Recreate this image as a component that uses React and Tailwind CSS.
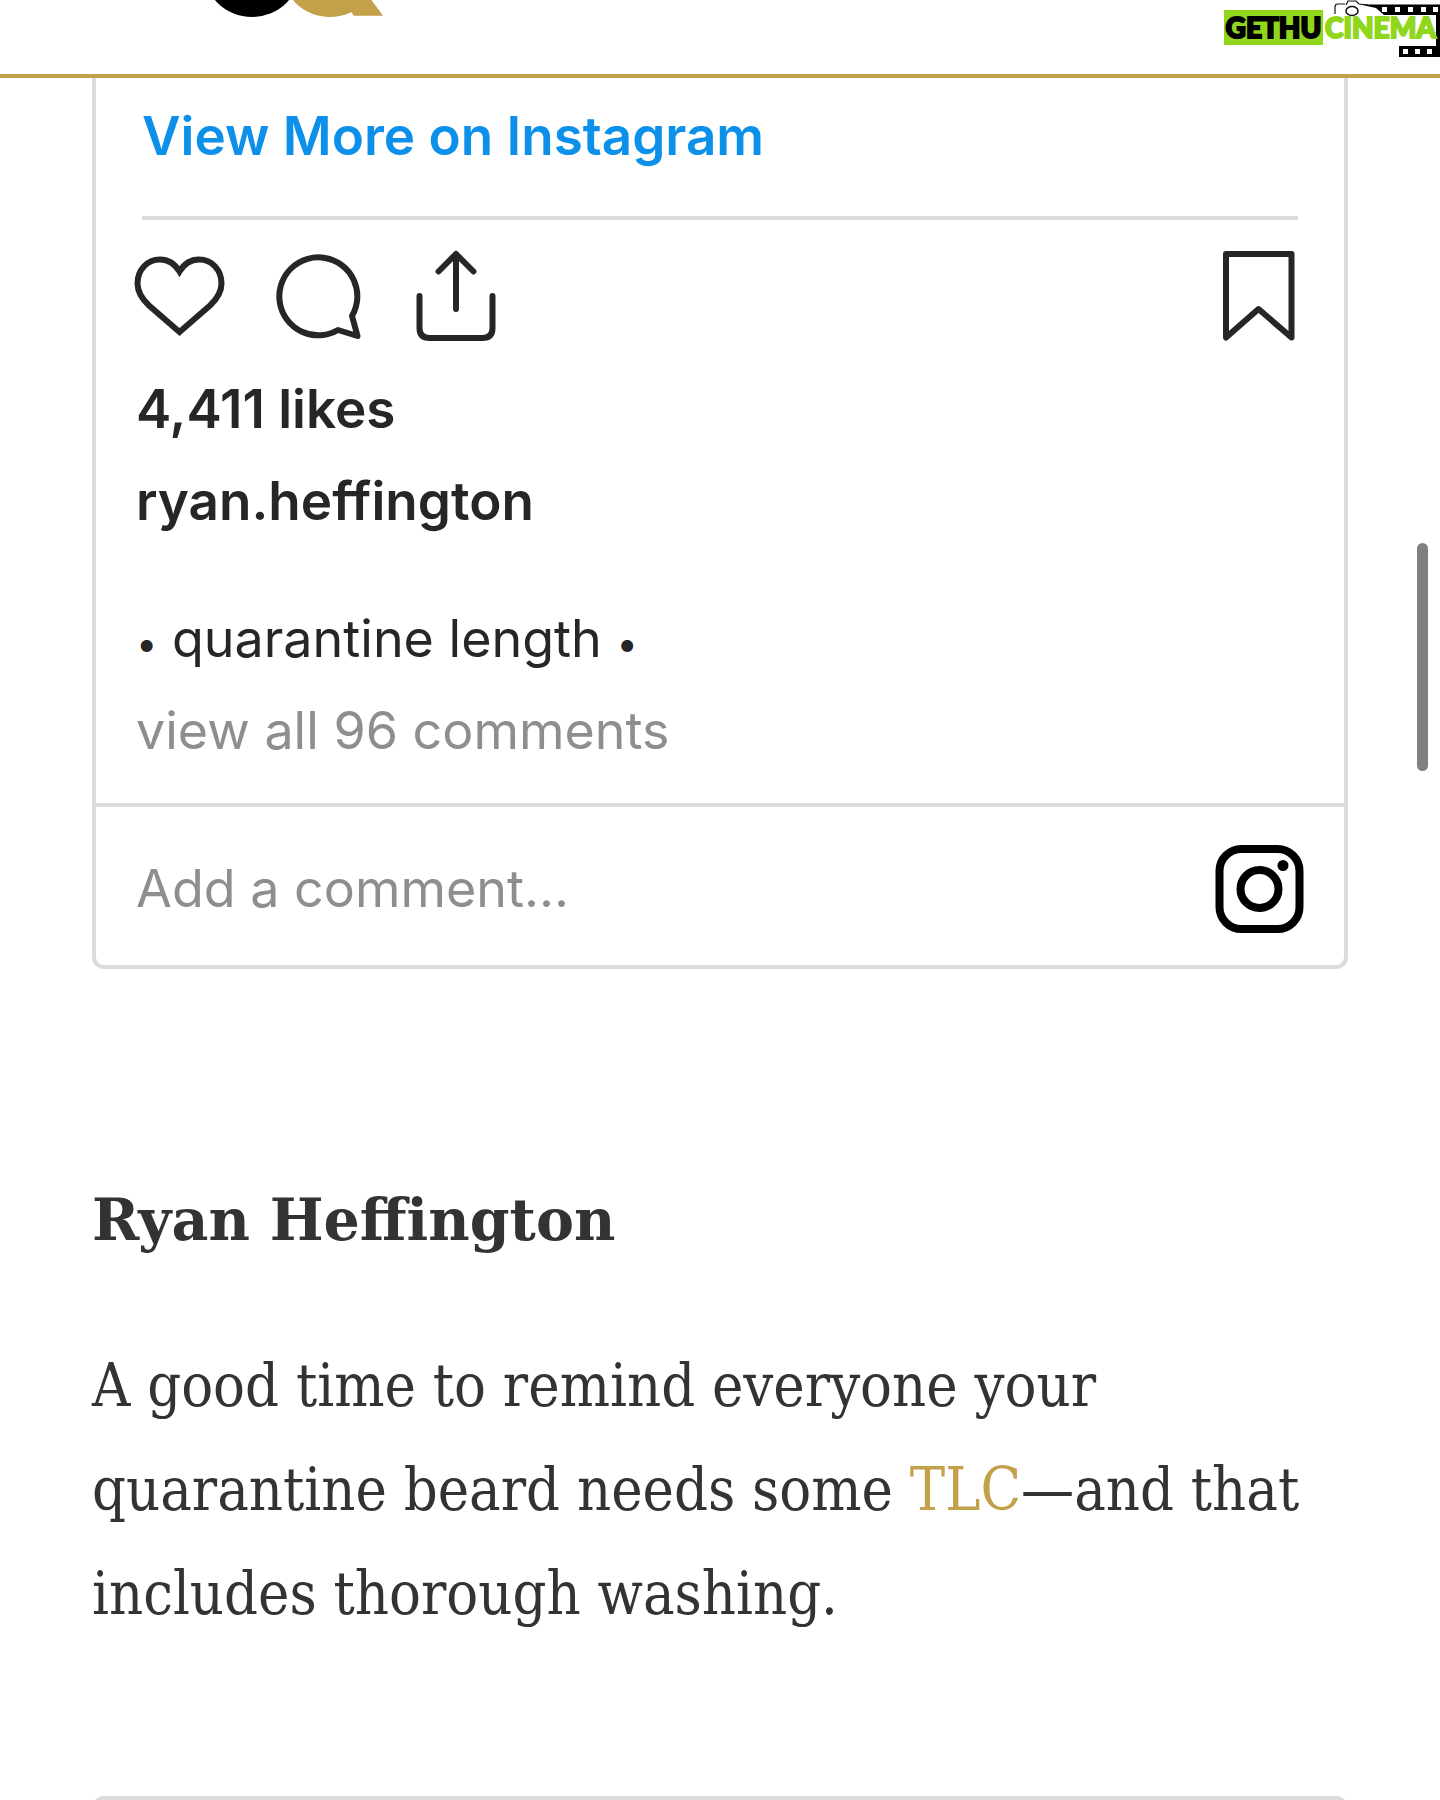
const FILM_TOP = [1382, 1395, 1408, 1421, 1433];
const FILM_BOTTOM = [1403, 1415, 1427];

const COMMENTS_COUNT = 96;

function GQLogo() {
  return (
    <svg className="ml-[200px] h-5 w-[184px]" viewBox="200 0 184 20" role="img" aria-label="GQ">
      <circle cx="252" cy="-32" r="49" fill="#000" />
      <circle cx="330" cy="-32" r="49" fill="#c3a04a" />
      <path d="M340 0 L351.500 12.500 L354 15.700 H383 L371.500 0 Z" fill="#c3a04a" />
    </svg>
  );
}

function FilmStrip() {
  return (
    <svg className="absolute right-0 top-0 h-[60px] w-[110px]" viewBox="1330 0 110 60" aria-hidden="true">
      <path d="M1360 4.500 H1440 V57 H1399 V46 H1436 V15 H1384 L1376 8 Z" fill="#000" />
      {FILM_TOP.map((x) => (
        <rect key={x} x={x} y="7" width="5" height="5" fill="#fff" />
      ))}
      {FILM_BOTTOM.map((x) => (
        <rect key={x} x={x} y="49" width="5" height="5" fill="#fff" />
      ))}
      <path
        d="M1335 14 V7 Q1335 4 1338 4 H1345 M1346 5 L1348 1 H1356 L1359 4 L1368 5"
        fill="none"
        stroke="#111"
        strokeWidth="1.200"
      />
      <ellipse cx="1352" cy="11" rx="6" ry="4.500" fill="#fff" stroke="#111" strokeWidth="1.500" />
    </svg>
  );
}

function Watermark() {
  return (
    <div className="absolute right-0 top-0 flex pt-[10px] font-['Lato'] text-[28px] leading-[35px] font-black [-webkit-text-stroke:2px]">
      <FilmStrip />
      <span className="relative w-[99px] bg-[#90d61c] text-center text-black">GETHU</span>
      <span className="relative w-[117px] pl-0.5 text-[#90d61c]">CINEMA</span>
    </div>
  );
}

const stroke = {
  fill: 'none',
  stroke: '#262626',
  strokeWidth: 6,
  strokeLinecap: 'round',
  strokeLinejoin: 'round',
};

function HeartIcon() {
  return (
    <svg className="size-24" viewBox="0 0 96 96" {...stroke} strokeLinejoin="miter" aria-hidden="true">
      <path d="M47.500 84 L17 57.500 C9 50 5.500 44 5.500 35.500 C5.500 22 15 11.500 28 11.500 C37 11.500 43 16 47.500 23.500 C52 16 58 11.500 67 11.500 C80 11.500 89.500 22 89.500 35.500 C89.500 44 86 50 78 57.500 Z" />
    </svg>
  );
}

function CommentIcon() {
  return (
    <svg className="size-24" viewBox="0 0 96 96" {...stroke} aria-hidden="true">
      <path d="M82 68 A39 39 0 1 0 68 82 L87.500 88 Z" />
    </svg>
  );
}

function ShareIcon() {
  return (
    <svg className="size-24" viewBox="0 0 96 96" {...stroke} aria-hidden="true">
      <path d="M48 6 V61 M30.500 23.500 L48 6 L65.500 23.500" />
      <path d="M11.500 48 V80 Q11.500 90 21.500 90 H74.500 Q84.500 90 84.500 80 V48" />
    </svg>
  );
}

function BookmarkIcon() {
  return (
    <svg className="size-24" viewBox="0 0 96 96" {...stroke} aria-hidden="true">
      <path d="M14 6 H79.500 V89.500 L46.500 61 L14 89.500 Z" />
    </svg>
  );
}

function InstagramIcon() {
  return (
    <svg className="size-24" viewBox="0 0 96 96" fill="none" stroke="#000" strokeWidth="8" role="img" aria-label="Instagram">
      <rect x="7.500" y="8" width="80" height="80" rx="22" />
      <circle cx="47.500" cy="48" r="19" />
      <circle cx="71" cy="24.500" r="5.500" fill="#000" stroke="none" />
    </svg>
  );
}

const ACTIONS = [
  { label: 'Like', icon: HeartIcon },
  { label: 'Comment', icon: CommentIcon },
  { label: 'Share', icon: ShareIcon },
];

function InstagramCard() {
  return (
    <section className="mx-[92px] rounded-b-xl border-x-4 border-b-4 border-[#dbdbdb] font-['Inter'] text-[52px] leading-[92px] text-[#262626]">
      <div className="mx-[46px] border-b-4 border-[#dbdbdb] pt-3 pb-[34px]">
        <a href="#instagram" className="block text-[53px] font-semibold text-[#0d90ea]">View More on Instagram</a>
      </div>

      <div className="mt-7 flex items-center px-9">
        <div className="flex gap-[42px]">
          {ACTIONS.map(({ label, icon: Icon }) => (
            <button key={label} aria-label={label}>
              <Icon />
            </button>
          ))}
        </div>
        <button className="ml-auto" aria-label="Save">
          <BookmarkIcon />
        </button>
      </div>

      <div className="mt-[19px] px-10 pb-[26px]">
        <p className="text-[53px] font-semibold">4,411 likes</p>
        <p className="text-[53px] font-semibold">ryan.heffington</p>
        <p className="mt-[46px]">
          <span className="text-[38px] leading-none">•</span> quarantine length <span className="text-[38px] leading-none">•</span>
        </p>
        <a href="#comments" className="block text-[#8e8e8e]">view all {COMMENTS_COUNT} comments</a>
      </div>

      <div className="flex items-center border-t-4 border-[#dbdbdb] px-9 pt-[34px] pb-7">
        <input
          type="text"
          aria-label="Add a comment"
          placeholder="Add a comment..."
          className="min-w-0 flex-1 pl-1 leading-[92px] outline-none placeholder:text-[#8e8e8e]"
        />
        <InstagramIcon />
      </div>
    </section>
  );
}

export default function App() {
  return (
    <div className="relative flex h-screen flex-col overflow-hidden bg-white">
      <header className="relative h-[78px] shrink-0 border-b-4 border-[#c3a04a]">
        <GQLogo />
        <Watermark />
      </header>

      <InstagramCard />

      <article className="mx-[92px] mt-[199px] text-[#333]">
        <h2 className="font-['DejaVu_Serif',serif] text-[57px] leading-[104px] font-bold">Ryan Heffington</h2>
        <p className="mt-[62px] font-['DejaVu_Serif_Condensed','DejaVu_Serif',serif] text-[59px] leading-[104px]">
          A good time to remind everyone your quarantine beard needs some{' '}
          <a href="#tlc" className="text-[#c3a04a]">TLC</a>—and that includes thorough washing.
        </p>
      </article>

      {/* Top edge of the next embedded post */}
      <section className="mx-[92px] mt-[150px] h-40 shrink-0 rounded-xl border-4 border-[#dbdbdb]" aria-label="Next post" />

      {/* Scroll position */}
      <div className="absolute right-3 top-[543px] h-[228px] w-[11px] rounded-full bg-[#808080]" />
    </div>
  );
}
